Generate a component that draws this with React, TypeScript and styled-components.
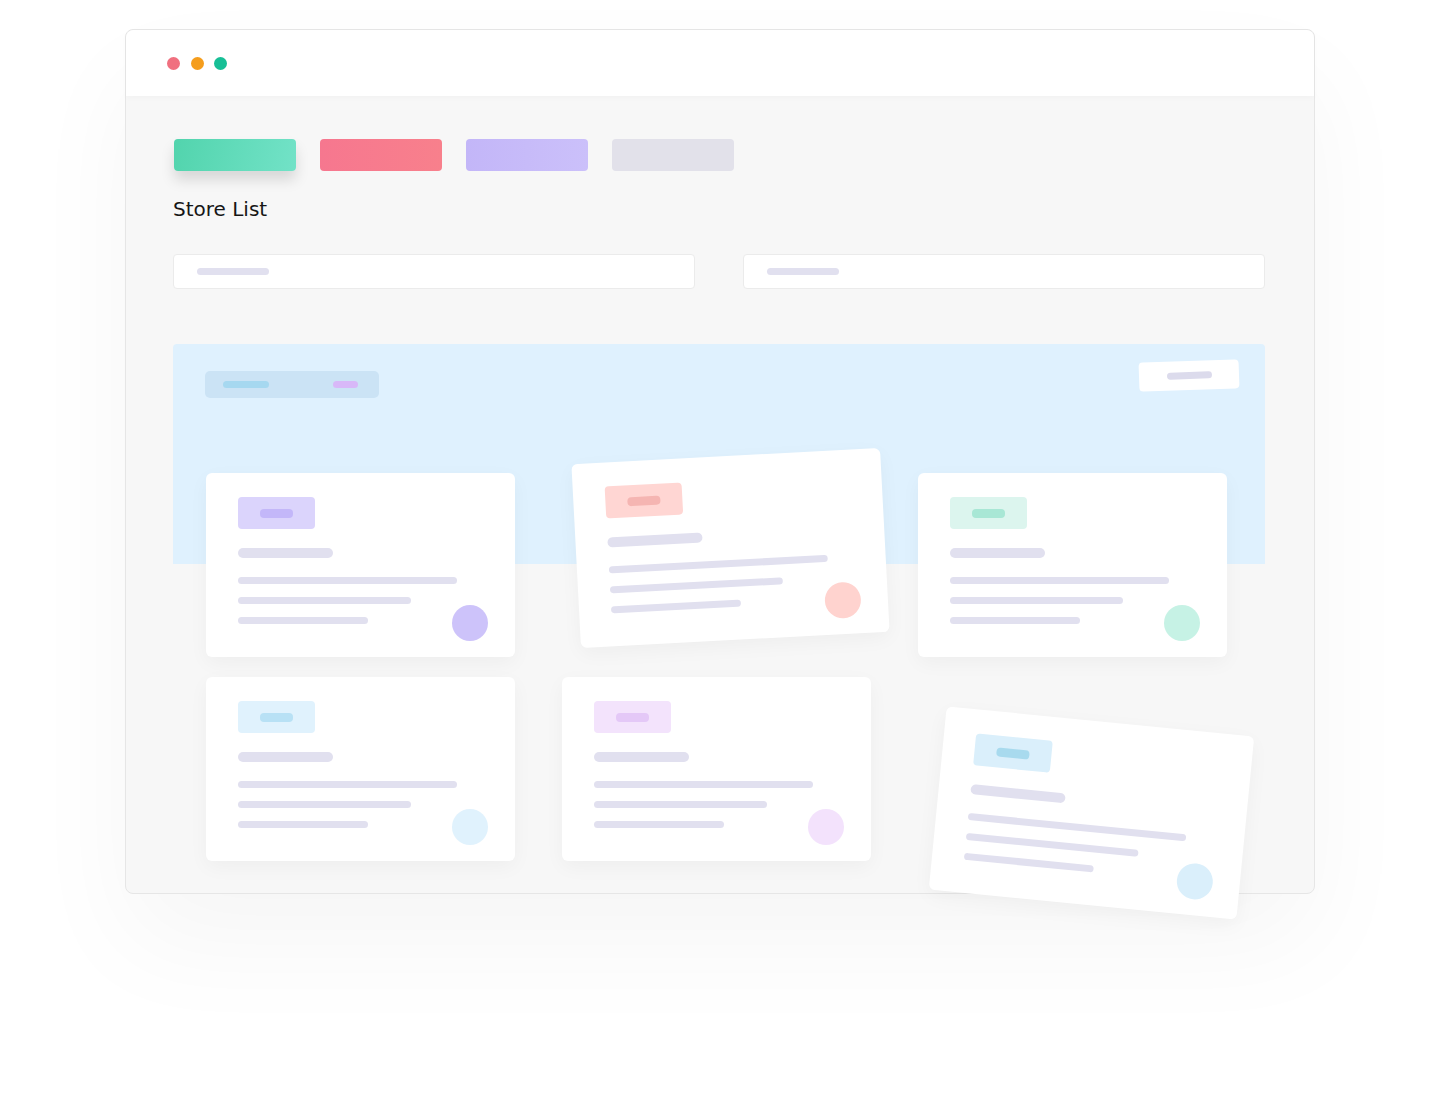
import styled, { createGlobalStyle } from 'styled-components'

const GlobalStyle = createGlobalStyle`
  html, body {
    margin: 0;
    padding: 0;
    background: #ffffff;
  }
  body {
    font-family: "DejaVu Sans", Verdana, sans-serif;
  }
`

type Theme = { tag: string; inner: string; dot: string }

const themes: Record<string, Theme> = {
  purple: { tag: '#dbd4fc', inner: '#c3b7f9', dot: '#cdc3fa' },
  red: { tag: '#ffd6d3', inner: '#f5b5b2', dot: '#ffd3cf' },
  green: { tag: '#dcf5ee', inner: '#a8e7d5', dot: '#c6f2e5' },
  blue: { tag: '#e0f2fd', inner: '#b8e1f5', dot: '#e0f2fd' },
  pink: { tag: '#f3e3fc', inner: '#e4c8f7', dot: '#f3e2fc' },
  sky: { tag: '#daeffb', inner: '#a8daee', dot: '#daeffb' },
}

const Page = styled.div`
  padding: 29px 126px 220px 125px;
`

const Window = styled.div`
  width: 1190px;
  border: 1px solid #e6e6e6;
  border-radius: 8px;
  background: #f7f7f7;
  box-shadow: 0 50px 110px rgba(0, 0, 0, 0.04);
  box-sizing: border-box;
`

const TitleBar = styled.div`
  height: 66px;
  display: flex;
  align-items: center;
  gap: 10.5px;
  padding-left: 41px;
  background: #ffffff;
  border-radius: 8px 8px 0 0;
  box-shadow: 0 2px 6px rgba(0, 0, 0, 0.025);
  position: relative;
`

const Dot = styled.span<{ $color: string }>`
  width: 13px;
  height: 13px;
  border-radius: 50%;
  background: ${p => p.$color};
`

const Body = styled.div`
  padding: 43px 49px 32px 47px;
`

const Tabs = styled.div`
  display: flex;
  gap: 24px;
  padding-left: 1px;
`

const Tab = styled.div<{ $bg: string; $shadow?: boolean }>`
  width: 122px;
  height: 32px;
  border-radius: 4px;
  background: ${p => p.$bg};
  box-shadow: ${p => (p.$shadow ? '0 9px 14px rgba(0, 0, 0, 0.13)' : 'none')};
`

const Heading = styled.h1`
  margin: 26px 0 0;
  font-size: 20px;
  line-height: 24px;
  font-weight: 400;
  color: #161616;
`

const Filters = styled.div`
  display: grid;
  grid-template-columns: 1fr 1fr;
  gap: 48px;
  margin-top: 33px;
`

const Input = styled.div`
  height: 35px;
  box-sizing: border-box;
  display: flex;
  align-items: center;
  padding-left: 23px;
  background: #ffffff;
  border: 1px solid #ebebeb;
  border-radius: 4px;
`

const Bar = styled.span<{ $w: number; $h?: number; $color?: string }>`
  display: block;
  flex-shrink: 0;
  width: ${p => p.$w}px;
  height: ${p => p.$h ?? 7}px;
  border-radius: 4px;
  background: ${p => p.$color ?? '#e1e0ef'};
`

const Board = styled.div`
  margin-top: 55px;
  padding: 27px 26px 0 32px;
  border-radius: 4px 4px 0 0;
  background: linear-gradient(#dff1fe, #dff1fe) top left / 100% 220px no-repeat;
`

const BoardHeader = styled.div`
  display: flex;
  justify-content: space-between;
  align-items: flex-start;
  height: 27px;
`

const Filter = styled.div`
  width: 174px;
  height: 27px;
  box-sizing: border-box;
  display: flex;
  align-items: center;
  justify-content: space-between;
  padding: 0 21px 0 18px;
  border-radius: 5px;
  background: #cbe3f5;
`

const Chip = styled.div`
  width: 100px;
  height: 29px;
  margin-top: -10px;
  display: flex;
  align-items: center;
  justify-content: center;
  border-radius: 4px;
  background: #ffffff;
  transform: rotate(-2deg);
`

const Grid = styled.div`
  display: grid;
  grid-template-columns: repeat(3, 309px);
  grid-auto-rows: 184px;
  column-gap: 47px;
  row-gap: 20px;
  margin-top: 75px;
  padding-left: 1px;
`

const Card = styled.div<{ $tilt?: string }>`
  box-sizing: border-box;
  padding: 24px 27px 16px 32px;
  display: flex;
  flex-direction: column;
  background: #ffffff;
  border-radius: 6px;
  box-shadow: 0 6px 20px rgba(0, 0, 0, 0.04);
  transform: ${p => p.$tilt ?? 'none'};
`

const Tag = styled.div<{ $bg: string }>`
  width: 77px;
  height: 32px;
  display: flex;
  align-items: center;
  justify-content: center;
  border-radius: 4px;
  background: ${p => p.$bg};
`

const Title = styled(Bar)`
  margin-top: 19px;
  border-radius: 5px;
`

const Lower = styled.div`
  margin-top: 19px;
  display: flex;
  justify-content: space-between;
  align-items: flex-end;
`

const Lines = styled.div`
  display: flex;
  flex-direction: column;
  gap: 13px;
  margin: 0 -5px 17px 0;
`

const Avatar = styled.span<{ $bg: string }>`
  flex-shrink: 0;
  width: 36px;
  height: 36px;
  border-radius: 50%;
  background: ${p => p.$bg};
`

const StoreCard = ({ theme, tilt }: { theme: Theme; tilt?: string }) => (
  <Card $tilt={tilt}>
    <Tag $bg={theme.tag}>
      <Bar $w={33} $h={9} $color={theme.inner} />
    </Tag>
    <Title $w={95} $h={10} />
    <Lower>
      <Lines>
        <Bar $w={219} />
        <Bar $w={173} />
        <Bar $w={130} />
      </Lines>
      <Avatar $bg={theme.dot} />
    </Lower>
  </Card>
)

export default function App() {
  return (
    <>
      <GlobalStyle />
      <Page>
        <Window>
          <TitleBar>
            <Dot $color="#f0707f" />
            <Dot $color="#f59d1c" />
            <Dot $color="#17bf96" />
          </TitleBar>
          <Body>
            <Tabs>
              <Tab $bg="linear-gradient(100deg, #52d4ad, #72e2c7)" $shadow />
              <Tab $bg="linear-gradient(90deg, #f6778f, #f8808c)" />
              <Tab $bg="linear-gradient(90deg, #c3b6f8, #cbc0fa)" />
              <Tab $bg="#e2e1ea" />
            </Tabs>
            <Heading>Store List</Heading>
            <Filters>
              <Input>
                <Bar $w={72} />
              </Input>
              <Input>
                <Bar $w={72} />
              </Input>
            </Filters>
            <Board>
              <BoardHeader>
                <Filter>
                  <Bar $w={46} $color="#a6d8f0" />
                  <Bar $w={25} $color="#d8b8f8" />
                </Filter>
                <Chip>
                  <Bar $w={45} $color="#dcdbec" />
                </Chip>
              </BoardHeader>
              <Grid>
                <StoreCard theme={themes.purple} />
                <StoreCard theme={themes.red} tilt="translate(14px, -17px) rotate(-3deg)" />
                <StoreCard theme={themes.green} />
                <StoreCard theme={themes.blue} />
                <StoreCard theme={themes.pink} />
                <StoreCard theme={themes.sky} tilt="translate(19px, 44px) rotate(5.6deg)" />
              </Grid>
            </Board>
          </Body>
        </Window>
      </Page>
    </>
  )
}
